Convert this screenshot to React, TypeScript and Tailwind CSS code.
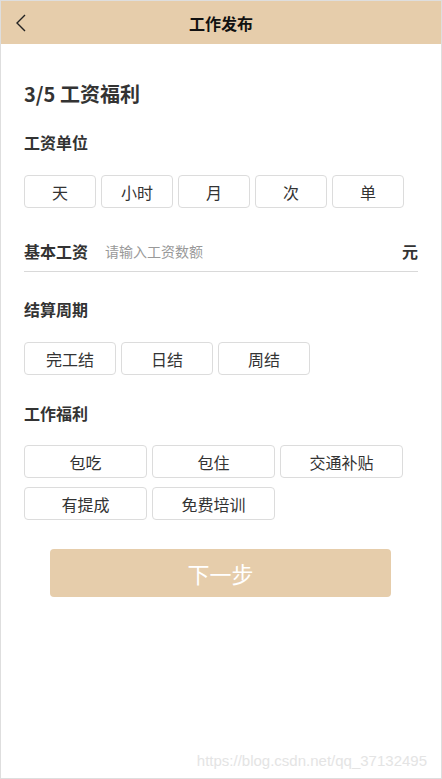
import { useState } from 'react';

const units = ['天', '小时', '月', '次', '单'];
const cycles = ['完工结', '日结', '周结'];
const welfare = ['包吃', '包住', '交通补贴', '有提成', '免费培训'];

function Chip({ label, width }: { label: string; width: string }) {
  return (
    <button
      type="button"
      className={`${width} h-[33px] rounded-[4px] border border-[#dcdcdc] bg-white text-[16px] text-[#333]`}
    >
      {label}
    </button>
  );
}

export default function App() {
  const [salary, setSalary] = useState('');

  return (
    <div
      className="w-[442px] h-[779px] border border-[#dedede] bg-white flex flex-col relative overflow-hidden"
      style={{ fontFamily: '"Microsoft YaHei", "Noto Sans CJK SC", sans-serif' }}
    >
      {/* Header */}
      <div className="h-[43px] bg-[#e6cdab] flex items-center relative shrink-0">
        <button type="button" className="absolute left-[13px] top-[12px] text-[#222]">
          <svg width="14" height="20" viewBox="0 0 14 20" fill="none">
            <path d="M11 2 L3 10 L11 18" stroke="currentColor" strokeWidth="1.4" />
          </svg>
        </button>
        <h1 className="flex-1 text-center text-[16px] font-bold text-[#111]">工作发布</h1>
      </div>

      <div className="px-[23px] flex flex-col">
        <h2 className="mt-[36px] text-[20px] font-bold text-[#333] leading-[28px]">3/5 工资福利</h2>

        {/* 工资单位 */}
        <div className="mt-[23px] text-[16px] font-bold text-[#333] leading-[22px]">工资单位</div>
        <div className="mt-[22px] flex gap-[5px]">
          {units.map((u) => (
            <Chip key={u} label={u} width="w-[72px]" />
          ))}
        </div>

        {/* 基本工资 */}
        <div className="mt-[26px] flex items-center h-[38px] border-b border-[#d9d9d9] pb-[3px]">
          <span className="text-[16px] font-bold text-[#333] w-[81px] shrink-0">基本工资</span>
          <input
            value={salary}
            onChange={(e) => setSalary(e.target.value)}
            placeholder="请输入工资数额"
            className="flex-1 text-[14px] text-[#333] placeholder-[#999] outline-none bg-transparent"
          />
          <span className="text-[16px] font-bold text-[#333]">元</span>
        </div>

        {/* 结算周期 */}
        <div className="mt-[26px] text-[16px] font-bold text-[#333] leading-[22px]">结算周期</div>
        <div className="mt-[22px] flex gap-[5px]">
          {cycles.map((c) => (
            <Chip key={c} label={c} width="w-[92px]" />
          ))}
        </div>

        {/* 工作福利 */}
        <div className="mt-[27px] text-[16px] font-bold text-[#333] leading-[22px]">工作福利</div>
        <div className="mt-[21px] grid grid-cols-[123px_123px_123px] gap-x-[5px] gap-y-[9px]">
          {welfare.map((w) => (
            <Chip key={w} label={w} width="w-full" />
          ))}
        </div>

        <button
          type="button"
          className="mt-[29px] w-[341px] h-[48px] rounded-[4px] bg-[#e6cdab] text-white text-[22px] ml-[26px]"
        >
          下一步
        </button>
      </div>

      <div className="absolute right-[14px] bottom-[6px] text-[15px] text-[#e4e4e4]" style={{ fontFamily: 'Arial, "Liberation Sans", sans-serif' }}>
        https://blog.csdn.net/qq_37132495
      </div>
    </div>
  );
}
